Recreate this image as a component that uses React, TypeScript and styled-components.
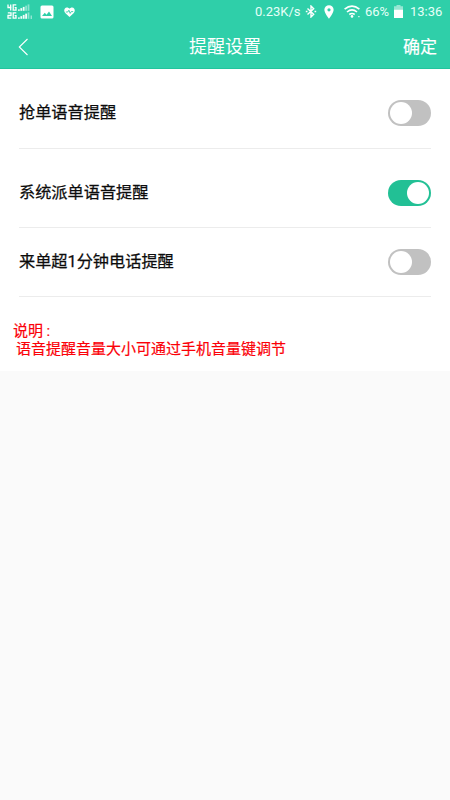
import React, { useState } from "react";
import styled, { createGlobalStyle } from "styled-components";

const GlobalStyle = createGlobalStyle`
  * { box-sizing: border-box; }
  body { margin: 0; background: #fafafa; }
`;

const Screen = styled.div`
  width: 450px;
  height: 800px;
  overflow: hidden;
  background: #fafafa;
  color: #0c0c0c;
  font-family: Roboto, "Noto Sans CJK SC", sans-serif;
`;

const Header = styled.header`
  height: 69px;
  background: #2fcfa9;
  border-bottom: 1px solid #22c49d;
  color: #fff;
`;

const StatusBar = styled.div`
  height: 24px;
  padding: 0 8px 0 7px;
  display: flex;
  justify-content: space-between;
  color: #e6fff8;
`;

const StatusGroup = styled.div`
  display: flex;
  align-items: center;
  height: 23px;
`;

const StatusText = styled.span<{ $w: number }>`
  width: ${(p) => p.$w}px;
  font-size: 13px;
  line-height: 24px;
  padding-top: 1px;
  white-space: nowrap;
`;

const Icon = styled.svg<{ $ml?: number; $mr?: number }>`
  display: block;
  flex: none;
  margin-left: ${(p) => p.$ml ?? 0}px;
  margin-right: ${(p) => p.$mr ?? 0}px;
`;

const Signals = styled.div`
  width: 26px;
  display: grid;
  row-gap: 1px;
  margin-top: -1px;
`;

const SignalRow = styled.div`
  display: flex;
  align-items: flex-end;
  height: 7px;
`;

const TitleBar = styled.div`
  height: 45px;
  padding: 0 13px 0 18px;
  display: grid;
  grid-template-columns: 60px 1fr 60px;
  align-items: center;
`;

const PlainButton = styled.button`
  border: 0;
  padding: 0;
  background: none;
  color: inherit;
  font: inherit;
  font-size: 17px;
  line-height: 24px;
  text-align: right;
  -webkit-text-stroke: 0.2px currentColor;
`;

const Title = styled.h1`
  margin: 1px 5px 0 0;
  font-size: 18px;
  line-height: 26px;
  font-weight: 400;
  text-align: center;
`;

const Panel = styled.main`
  height: 302px;
  padding: 0 19px;
  background: #fff;
`;

const Row = styled.div<{ $h: number; $top: number }>`
  height: ${(p) => p.$h}px;
  padding-top: ${(p) => p.$top}px;
  border-bottom: 1px solid #ececec;
  display: flex;
  align-items: flex-start;
  justify-content: space-between;
`;

const Label = styled.span`
  padding-top: 2px;
  font-size: 16.2px;
  line-height: 24px;
  -webkit-text-stroke: 0.25px currentColor;
`;

const Track = styled.button<{ $on: boolean }>`
  width: 43px;
  height: 26px;
  margin-top: 1px;
  padding: 2px;
  border: 0;
  border-radius: 13px;
  display: flex;
  justify-content: ${(p) => (p.$on ? "flex-end" : "flex-start")};
  background: ${(p) => (p.$on ? "#22c095" : "#c1c1c1")};
`;

const Knob = styled.span`
  width: 22px;
  height: 22px;
  border-radius: 50%;
  background: #fff;
`;

const Note = styled.section`
  padding-top: 25px;
  margin-left: -6px;
  color: #fb0007;
  font-size: 15px;
  line-height: 18px;
  -webkit-text-stroke: 0.2px currentColor;
`;

const NoteLine = styled.p<{ $indent?: boolean }>`
  margin: 0;
  padding-left: ${(p) => (p.$indent ? 3 : 0)}px;
  white-space: nowrap;
`;

const Colon = styled.span`
  margin-left: 3.5px;
`;

const rows = [
  { label: "抢单语音提醒", h: 80, top: 30, on: false },
  { label: "系统派单语音提醒", h: 79, top: 30, on: true },
  { label: "来单超1分钟电话提醒", h: 69, top: 20, on: false },
];

function Signal({ four, lit }: { four?: boolean; lit: number }) {
  return (
    <SignalRow>
      <svg width="26" height="7" viewBox="0 0 26 7" fill="none">
        <path
          d={four ? "M1 .5V3.5H4.5M3.7 .5V6.5" : "M.8 .8H4V3.5H1V6.2H4.3"}
          stroke="#fff"
          strokeWidth="1.3"
        />
        <path d="M9.3 .8H6.2V6.2H9V3.7H7.6" stroke="#fff" strokeWidth="1.3" />
        {[0, 1, 2, 3, 4].map((i) => (
          <rect
            key={i}
            x={11 + i * 2.4}
            y={5.4 - i * 1.25}
            width="1.8"
            height={1.4 + i * 1.25}
            fill="#fff"
            opacity={i < lit ? 0.95 : 0.45}
          />
        ))}
        {!four && <path d="M24.2 3.5V7" stroke="#fff" opacity=".7" />}
      </svg>
    </SignalRow>
  );
}

function Toggle({ initial, label }: { initial: boolean; label: string }) {
  const [on, setOn] = useState(initial);
  return (
    <Track $on={on} role="switch" aria-checked={on} aria-label={label} onClick={() => setOn(!on)}>
      <Knob />
    </Track>
  );
}

export default function App() {
  return (
    <Screen>
      <GlobalStyle />
      <Header>
        <StatusBar>
          <StatusGroup>
            <Signals>
              <Signal four lit={3} />
              <Signal lit={4} />
            </Signals>
            <Icon $ml={7} width="14" height="14" viewBox="0 0 14 14">
              <path
                fill="#fff"
                fillRule="evenodd"
                d="M2 .5H12Q13.5 .5 13.5 2V12Q13.5 13.5 12 13.5H2Q.5 13.5 .5 12V2Q.5 .5 2 .5ZM2 11H12L9 6.5L6.5 9.7L4.8 7.8Z"
              />
            </Icon>
            <Icon $ml={10} width="11" height="10" viewBox="0 0 11 10">
              <path
                fill="#fff"
                d="M5.5 10L1.2 5.9C-.6 4 .2 .5 2.9 .4C4.1 .4 5 1 5.5 1.8C6 1 6.9 .4 8.1 .4C10.8 .5 11.6 4 9.8 5.9Z"
              />
              <path d="M1.8 5H3.8L4.9 3.2L6.2 6.4L7.2 4.6H9.2" fill="none" stroke="#2fcfa9" strokeWidth=".9" />
            </Icon>
          </StatusGroup>
          <StatusGroup>
            <StatusText $w={50}>0.23K/s</StatusText>
            <Icon width="12" height="13" viewBox="0 0 12 13" fill="none" stroke="#fff" strokeWidth="1.4">
              <path d="M2.5 3.5L8.7 9.3L6 12V1L8.7 3.7L2.5 9.5" />
              <path d="M.8 6.5H2.5M9.5 6.5H11.2" strokeWidth="1.6" />
            </Icon>
            <Icon $ml={7} $mr={10} width="10" height="14" viewBox="0 0 9 13">
              <path
                fill="#fff"
                fillRule="evenodd"
                d="M4.5 .2A4.3 4.3 0 0 0 .2 4.5C.2 7.7 4.5 12.8 4.5 12.8S8.8 7.7 8.8 4.5A4.3 4.3 0 0 0 4.5 .2ZM4.5 3A1.5 1.5 0 1 1 4.5 6A1.5 1.5 0 1 1 4.5 3Z"
              />
            </Icon>
            <Icon $mr={4} width="17" height="13" viewBox="0 0 17 13" fill="none" stroke="#fff" strokeWidth="1.6">
              <path d="M.6 4.2Q8 -2 15.4 4.2M3 7Q8 2.8 13 7M5.3 9.5Q8 7.5 10.7 9.5" />
              <circle cx="8" cy="11.4" r="1.3" fill="#fff" stroke="none" />
              <path d="M14.2 11.7H15.6" strokeWidth="1" />
            </Icon>
            <StatusText $w={29}>66%</StatusText>
            <Icon $mr={7} width="9" height="13" viewBox="0 0 9 13" fill="#fff">
              <path d="M2.5 0H6.5V1.2H9V4.5H0V1.2H2.5Z" opacity=".5" />
              <path d="M0 4.5H9V13H0Z" />
            </Icon>
            <StatusText $w={32}>13:36</StatusText>
          </StatusGroup>
        </StatusBar>
        <TitleBar>
          <Icon width="11" height="18" viewBox="0 0 11 18" fill="none" stroke="#fff" strokeWidth="1.1">
            <path d="M9.5 1L1.3 9L9.5 17" />
          </Icon>
          <Title>提醒设置</Title>
          <PlainButton>确定</PlainButton>
        </TitleBar>
      </Header>
      <Panel>
        {rows.map((r) => (
          <Row key={r.label} $h={r.h} $top={r.top}>
            <Label>{r.label}</Label>
            <Toggle initial={r.on} label={r.label} />
          </Row>
        ))}
        <Note>
          <NoteLine>
            说明<Colon>:</Colon>
          </NoteLine>
          <NoteLine $indent>语音提醒音量大小可通过手机音量键调节</NoteLine>
        </Note>
      </Panel>
    </Screen>
  );
}
